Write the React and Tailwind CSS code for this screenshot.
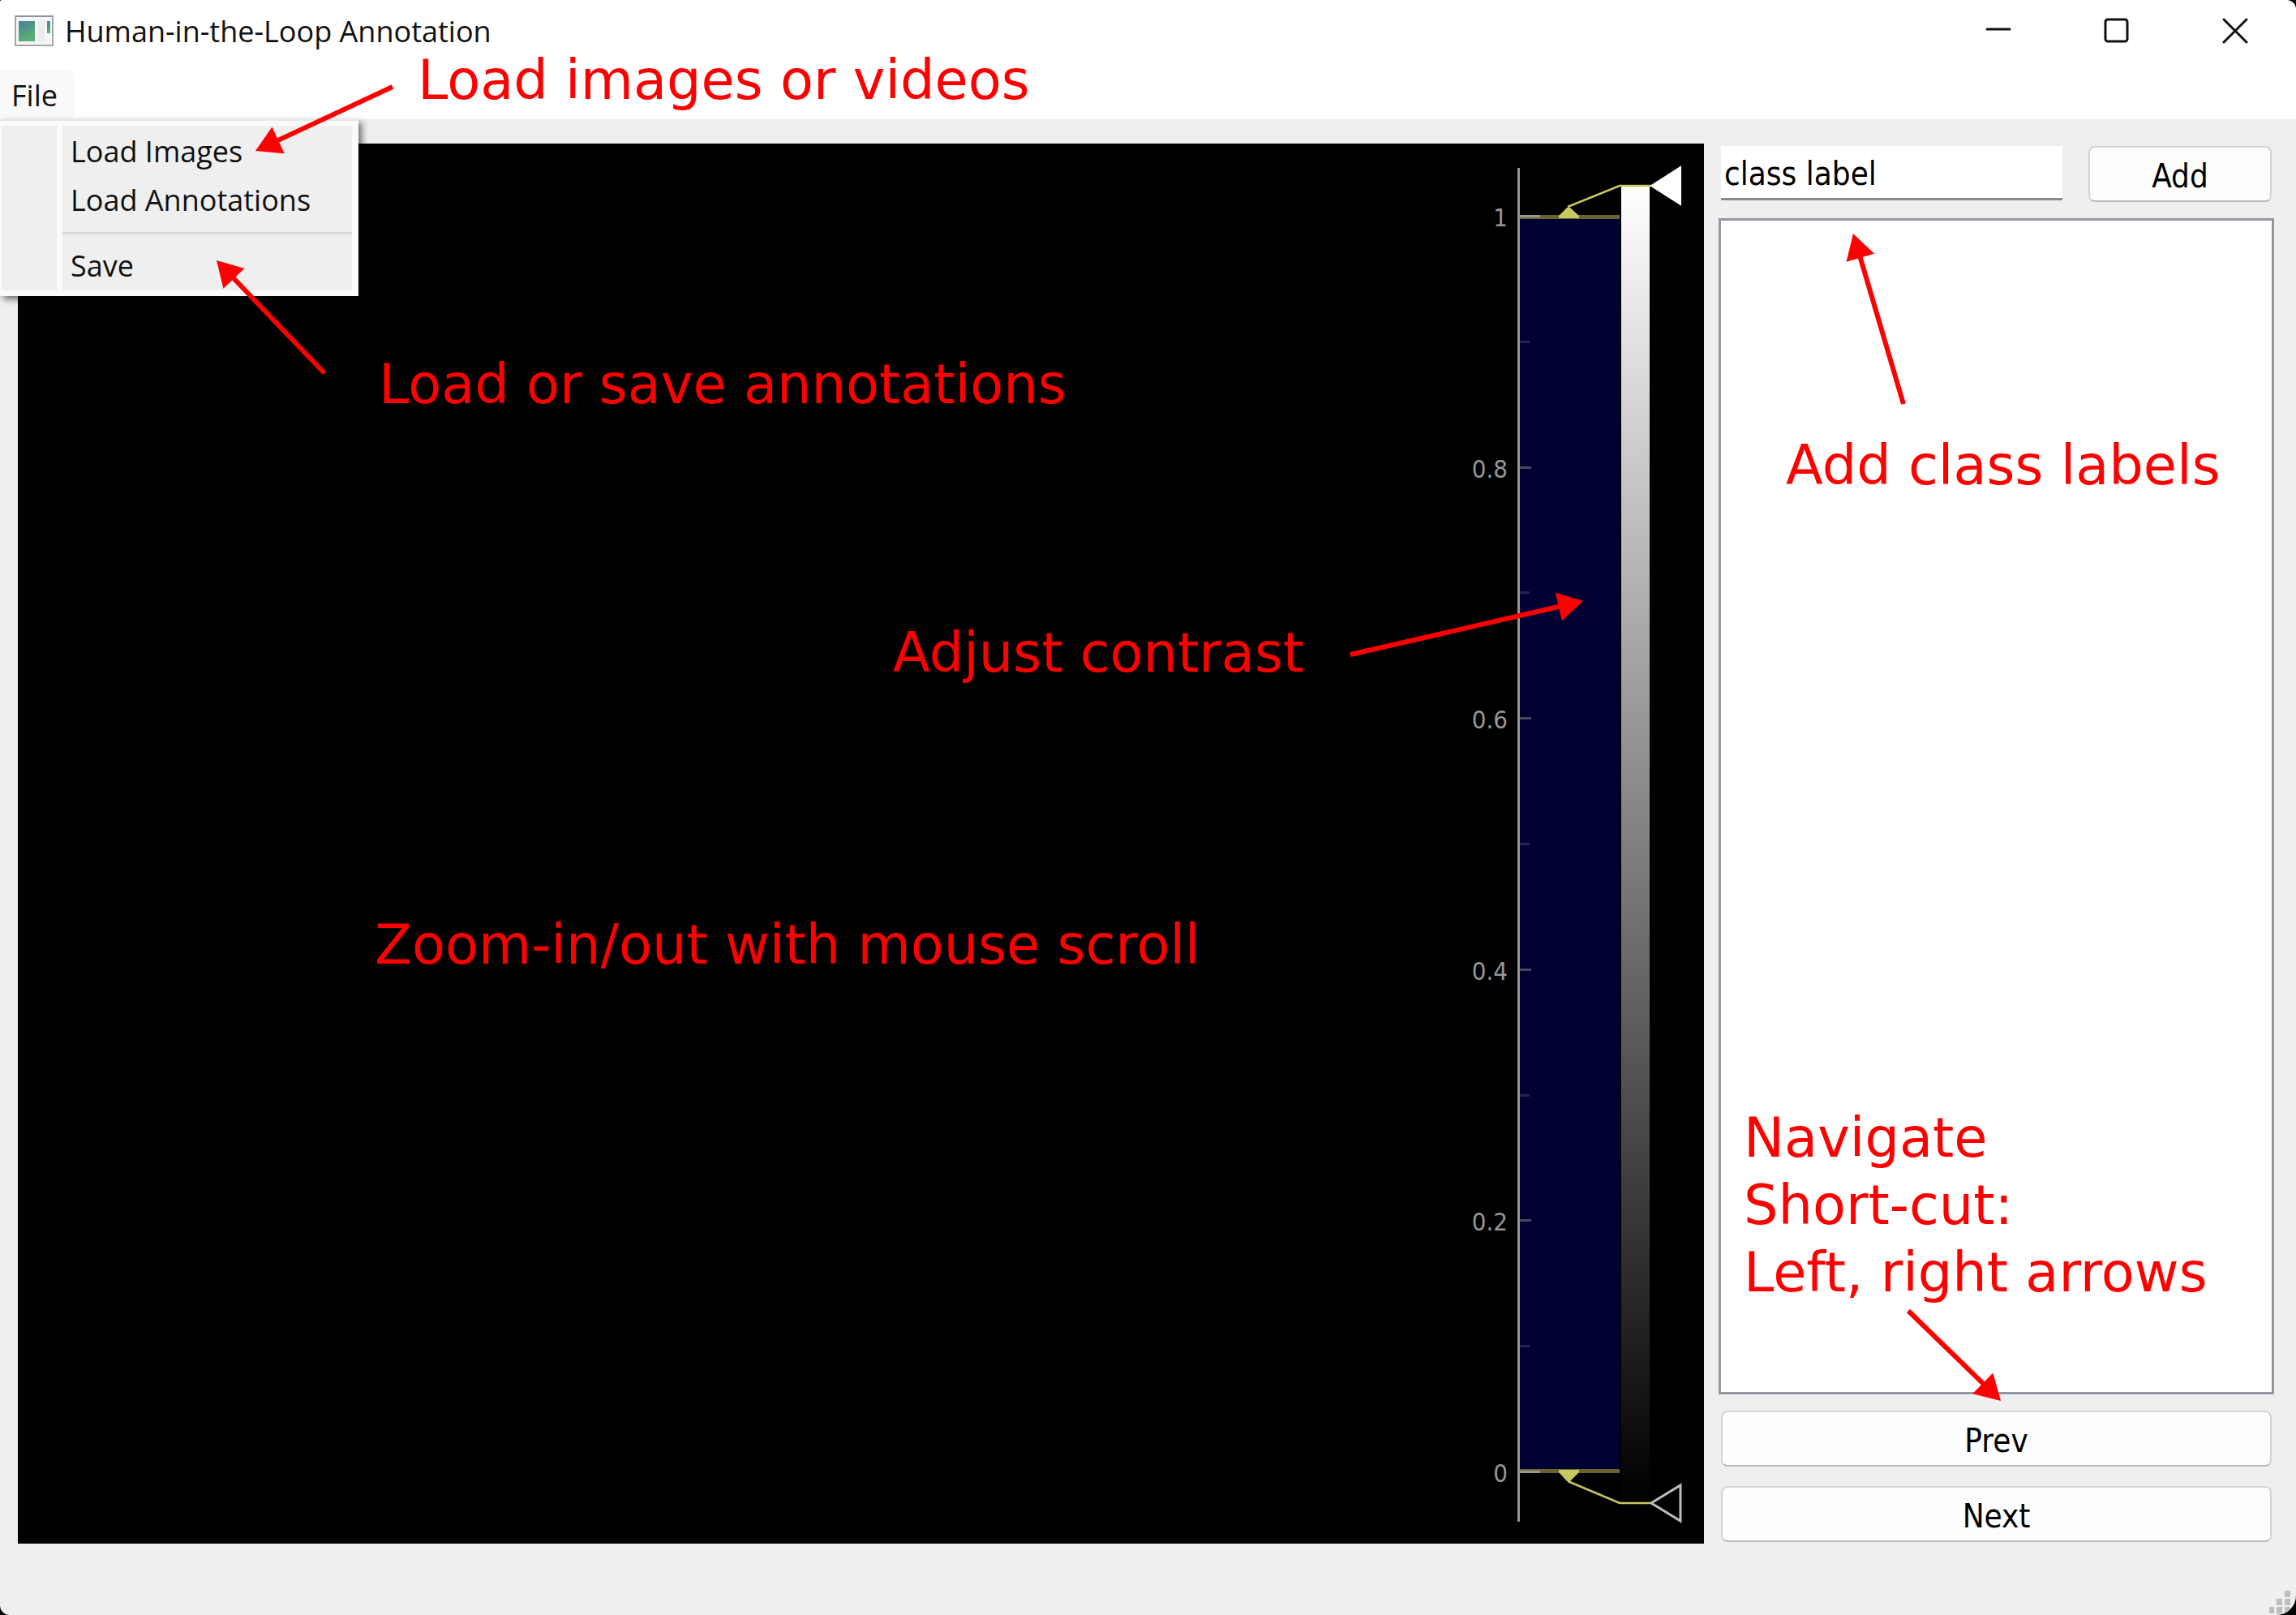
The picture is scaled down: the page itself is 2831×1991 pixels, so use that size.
import React from "react";

const SEGOE = "font-['Open_Sans','Noto_Sans',sans-serif]";
const TAHOMA = "font-['DejaVu_Sans_Condensed','DejaVu_Sans',sans-serif]";

const pushButton =
  "h-[69px] rounded-lg border-2 border-[#d4d4d4] border-b-[#bcbcbc] bg-[#fdfdfd] pt-1 text-[40px] leading-none text-black";

function AppIcon() {
  return (
    <svg width="48" height="40" viewBox="0 0 48 40" aria-hidden="true">
      <defs>
        <linearGradient id="pane" x1="0" y1="0" x2="0.4" y2="1">
          <stop offset="0" stopColor="#4a7fa0" />
          <stop offset="1" stopColor="#5bb070" />
        </linearGradient>
      </defs>
      <rect x="1" y="2" width="46" height="36" fill="#f6f6f8" stroke="#a3a7ab" strokeWidth="2" />
      <path d="M2 2H46" stroke="#8e949c" strokeWidth="2" />
      <rect x="5" y="8" width="20" height="25" fill="url(#pane)" />
      <rect x="29" y="8" width="8" height="25" fill="#ececee" />
      <rect x="40" y="8" width="4" height="15" fill="url(#pane)" />
    </svg>
  );
}

function TitleBar() {
  const control = "flex h-[76px] w-[146px] items-center justify-center";
  return (
    <header className="flex h-[85px] items-start bg-white pl-[18px] pr-[2px]">
      <div className="flex h-[76px] items-center gap-3.5">
        <AppIcon />
        <h1 className={`${SEGOE} pt-0.5 text-[36px] leading-[48px] text-[#111]`}>Human-in-the-Loop Annotation</h1>
      </div>
      <div className="ml-auto flex">
        <button className={control} aria-label="Minimize">
          <svg width="32" height="32" viewBox="0 0 32 32" stroke="#111" strokeWidth="3" strokeLinecap="round">
            <path d="M2 14H30" />
          </svg>
        </button>
        <button className={control} aria-label="Maximize">
          <svg width="32" height="32" viewBox="0 0 32 32" fill="none" stroke="#111" strokeWidth="3">
            <rect x="2" y="2" width="27" height="27" rx="3" />
          </svg>
        </button>
        <button className={control} aria-label="Close">
          <svg width="32" height="32" viewBox="0 0 32 32" stroke="#111" strokeWidth="3" strokeLinecap="round">
            <path d="M2 2L30 30M30 2L2 30" />
          </svg>
        </button>
      </div>
    </header>
  );
}

function FileMenu() {
  const item = "block h-[60px] w-full pl-2.5 text-left text-[36px] leading-[60px]";
  return (
    <nav className={`${SEGOE} relative z-10 flex h-[62px] bg-white text-[#111]`}>
      <button className="w-[92px] rounded-r-lg bg-[#f9f9f9] pl-3.5 pt-1 text-left text-[36px] leading-[58px]" aria-expanded="true">
        File
      </button>
      <div
        role="menu"
        className="absolute left-0 top-full w-[442px] border-t-2 border-[#e8e8e8] shadow-[4px_4px_8px_rgba(0,0,0,0.55)]"
      >
        <div className="flex gap-[7px] border-b-[7px] border-r-[8px] border-t-[6px] border-[#fafafa] bg-[#fafafa] pl-[2px]">
          <div className="w-[68px] bg-[#efefef]" />
          <div className="flex-1 bg-[#efefef] pt-0.5">
            <button role="menuitem" className={item}>Load Images</button>
            <button role="menuitem" className={item}>Load Annotations</button>
            <hr className="my-[9px] border-t-[3px] border-[#dadada]" />
            <button role="menuitem" className={item}>Save</button>
          </div>
        </div>
      </div>
    </nav>
  );
}

const AXIS_TOP = 90;
const AXIS_LENGTH = 1548;
const axisY = (value) => AXIS_TOP + Math.round((1 - value) * AXIS_LENGTH);
const MAJOR = [1, 0.8, 0.6, 0.4, 0.2, 0];

/* Intensity axis with the level region, grey gradient and its end handles */
function Histogram() {
  return (
    <svg width="310" viewBox="0 0 310 1726" className="h-full" role="img" aria-label="Contrast histogram">
      <defs>
        <linearGradient id="gray" x1="0" y1="0" x2="0" y2="1">
          <stop offset="0" stopColor="#fff" />
          <stop offset="1" stopColor="#000" />
        </linearGradient>
      </defs>
      <rect x="83" y="92" width="123" height="1543" fill="#000033" />
      <rect x="83" y="88" width="123" height="5" fill="#69642f" />
      <rect x="83" y="1634" width="123" height="5" fill="#69642f" />
      {Array.from({ length: 11 }, (_, i) => {
        const end = i === 0 || i === 10;
        return (
          <rect
            key={i}
            x="83"
            y={axisY(1 - i / 10) - 2}
            width={end ? 25 : i % 2 ? 12 : 14}
            height="3"
            fill={end ? "#969696" : i % 2 ? "#26264c" : "#46465f"}
          />
        );
      })}
      {MAJOR.map((value) => (
        <text
          key={value}
          x="68"
          y={axisY(value) + 12}
          textAnchor="end"
          fill="#969696"
          className={`${TAHOMA} text-[31px]`}
        >
          {value}
        </text>
      ))}
      <rect x="80" y="30" width="3" height="1669" fill="#969696" />
      <rect x="208" y="52" width="35" height="1624" fill="url(#gray)" />
      <g fill="none" stroke="#c8c860" strokeWidth="2.5">
        <path d="M142 78L206 52H245" />
        <path d="M142 1649L206 1676H245" />
      </g>
      <path d="M131 92V89L141 79H145L156 89V92Z" fill="#c8c860" />
      <path d="M131 1635V1638L141 1649H145L156 1638V1635Z" fill="#c8c860" />
      <path d="M245 52L281 29V75Z" fill="#fff" stroke="#fff" strokeWidth="2" />
      <path d="M245 1676L281 1654V1698Z" fill="#000" stroke="#bdbdbd" strokeWidth="3" />
    </svg>
  );
}

function SidePanel() {
  return (
    <aside className={`${TAHOMA} flex w-[685px] flex-col`}>
      <form className="mx-[3px] mt-[3px] flex h-[69px] items-start gap-8" onSubmit={(e) => e.preventDefault()}>
        <input
          aria-label="Class label"
          defaultValue="class label"
          className="h-[67px] min-w-0 flex-1 border-b-[3px] border-[#8a8a8a] bg-white pl-1 pt-1 text-[40px] leading-[60px] text-black outline-none"
        />
        <button className={`w-[226px] ${pushButton}`}>Add</button>
      </form>
      <div role="listbox" aria-label="Class labels" className="mt-5 flex-1 border-[3px] border-[#9297a1] bg-white" />
      <div className="mx-[3px] mb-[2px] mt-5 flex flex-col gap-6">
        <button className={pushButton}>Prev</button>
        <button className={pushButton}>Next</button>
      </div>
    </aside>
  );
}

function Arrow({ from, to }) {
  const dx = to[0] - from[0];
  const dy = to[1] - from[1];
  const len = Math.hypot(dx, dy);
  const angle = (Math.atan2(dy, dx) * 180) / Math.PI;
  return (
    <g transform={`translate(${from[0]} ${from[1]}) rotate(${angle})`} fill="#ff0000">
      <rect x="0" y="-3" width={len - 28} height="6" />
      <path d={`M${len} 0L${len - 31} -18V18Z`} />
    </g>
  );
}

const note = "absolute whitespace-pre text-[67px] leading-[83px] text-[#ff0000]";

/* Hand-placed call-outs that float over the window */
function Callouts() {
  return (
    <div className="pointer-events-none absolute inset-0 z-20 font-['DejaVu_Sans',sans-serif]">
      <p className={`${note} left-[515px] top-[58px]`}>Load images or videos</p>
      <p className={`${note} left-[467px] top-[433px]`}>Load or save annotations</p>
      <p className={`${note} left-[1101px] top-[764px]`}>Adjust contrast</p>
      <p className={`${note} left-[462px] top-[1124px]`}>Zoom-in/out with mouse scroll</p>
      <svg className="absolute left-0 top-0 h-full w-[2101px]" aria-hidden="true">
        <Arrow from={[484, 107]} to={[315, 186]} />
        <Arrow from={[400, 460]} to={[267, 321]} />
        <Arrow from={[1665, 807]} to={[1952, 741]} />
      </svg>
      <div className="absolute inset-y-0 right-0 w-[731px]">
        <p className={`${note} left-[102px] top-[533px]`}>Add class labels</p>
        <p className={`${note} left-[50px] top-[1362px]`}>{"Navigate\nShort-cut:\nLeft, right arrows"}</p>
        <svg className="absolute inset-0 h-full w-full" aria-hidden="true">
          <Arrow from={[247, 498]} to={[185, 288]} />
          <Arrow from={[253, 1616]} to={[367, 1727]} />
        </svg>
      </div>
    </div>
  );
}

export default function App() {
  return (
    <div className="bg-black">
      <div className="relative flex min-h-screen flex-col overflow-hidden rounded-bl-[12px] rounded-br-[24px] rounded-tl-[3px] rounded-tr-[12px] bg-[#efefef]">
        <TitleBar />
        <FileMenu />
        <main className="flex flex-1 gap-[18px] pb-[88px] pl-[22px] pr-[27px] pt-[30px]">
          <section className="flex min-w-0 flex-1 justify-end bg-black" aria-label="Image view">
            <Histogram />
          </section>
          <SidePanel />
        </main>
        <svg className="absolute bottom-[2px] right-[7px]" width="27" height="28" viewBox="0 0 27 28" fill="#bfbfbf" aria-hidden="true">
          <path d="M20 0h7v8h-7zM10 10h7v8h-7zM20 10h7v8h-7zM1 20h6v8h-6zM10 20h7v8h-7zM20 20h7v8h-7z" />
        </svg>
        <Callouts />
      </div>
    </div>
  );
}
